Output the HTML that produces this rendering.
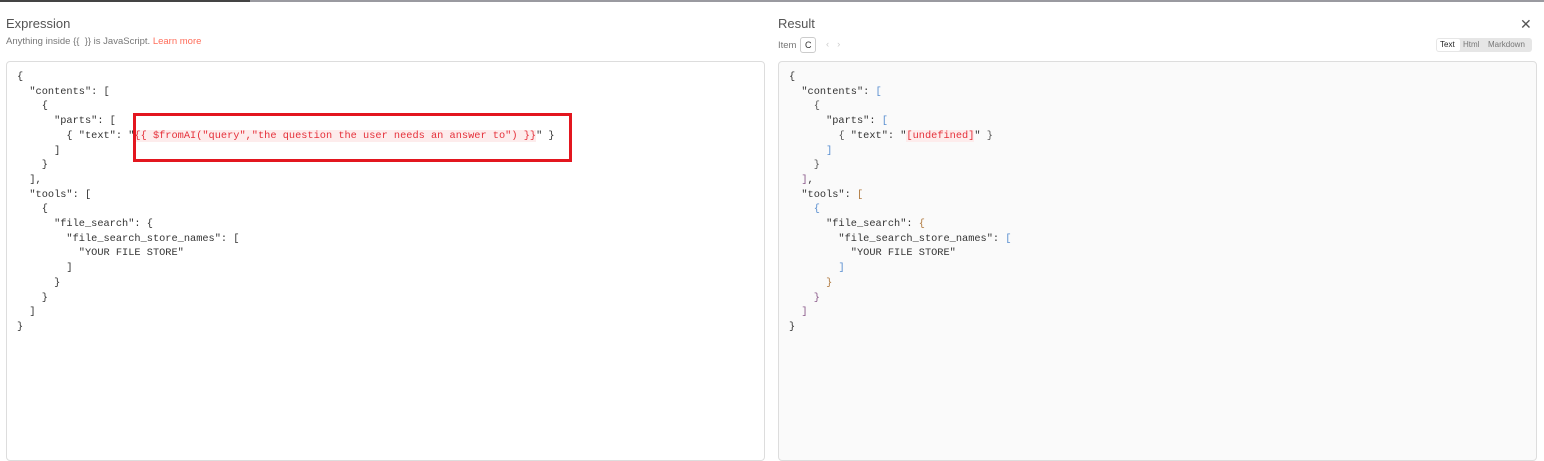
<!DOCTYPE html>
<html><head><meta charset="utf-8"><style>
*{margin:0;padding:0;box-sizing:border-box}
body{width:1544px;height:454px;overflow:hidden;background:#fff;font-family:"Liberation Sans",sans-serif;position:relative}
.top{position:absolute;left:0;top:0;width:1544px;height:2px;background:#9a9aa0}
.top2{position:absolute;left:0;top:0;width:250px;height:2px;background:#444}
.h{position:absolute;font-size:13px;color:#555}
.sub{position:absolute;font-size:9.5px;color:#777}
.box{position:absolute;top:61px;height:400px;border:1px solid #ddd;border-radius:4px}
pre{position:absolute;font-family:"Liberation Mono",monospace;font-size:10.3px;line-height:14.7px;color:#333;letter-spacing:0}
.r{color:#e5303a;background:#fdecec}
.red{position:absolute;left:133px;top:113px;width:439px;height:49px;border:3px solid #e3161f}
.b1{color:#5a8fd0}.b2{color:#555}.b3{color:#8a5a8a}.b4{color:#b07a40}
</style></head><body>
<div class="top"></div><div class="top2"></div>
<div class="h" style="left:6px;top:16px">Expression</div>
<div class="sub" style="left:6px;top:36px">Anything inside {{&nbsp; }} is JavaScript. <span style="color:#ff6d5a">Learn more</span></div>
<div class="box" style="left:6px;width:759px;background:#fff"></div>
<pre style="left:17px;top:70px">{
  "contents": [
    {
      "parts": [
        { "text": "<span class="r">{{ $fromAI("query","the question the user needs an answer to") }}</span>" }
      ]
    }
  ],
  "tools": [
    {
      "file_search": {
        "file_search_store_names": [
          "YOUR FILE STORE"
        ]
      }
    }
  ]
}</pre>
<div class="red"></div>

<div class="h" style="left:778px;top:16px">Result</div>
<div style="position:absolute;left:1520px;top:16px;font-size:14px;color:#555">✕</div>
<div class="sub" style="left:778px;top:40px">Item</div>
<div style="position:absolute;left:800px;top:37px;width:16px;height:16px;border:1px solid #ccc;border-radius:3px;font-size:9px;color:#333;padding:2px 0 0 4px">C</div>
<div class="sub" style="left:826px;top:39px;color:#ccc">‹ &nbsp; ›</div>
<div style="position:absolute;left:1436px;top:38px;width:96px;height:14px;background:#e6e6e6;border-radius:3px;font-size:8px;color:#777">
<span style="position:absolute;left:1px;top:1px;width:23px;height:12px;background:#fff;border-radius:2px;color:#222;padding:1px 0 0 3px">Text</span>
<span style="position:absolute;left:27px;top:2px">Html</span>
<span style="position:absolute;left:52px;top:2px">Markdown</span></div>
<div class="box" style="left:778px;width:759px;background:#fafafa"></div>
<pre style="left:789px;top:70px">{
  "contents": <span class="b1">[</span>
    <span class="b2">{</span>
      "parts": <span class="b1">[</span>
        <span class="b2">{</span> "text": "<span class="r">[undefined]</span>" <span class="b2">}</span>
      <span class="b1">]</span>
    <span class="b2">}</span>
  <span class="b3">]</span>,
  "tools": <span class="b4">[</span>
    <span class="b1">{</span>
      "file_search": <span class="b4">{</span>
        "file_search_store_names": <span class="b1">[</span>
          "YOUR FILE STORE"
        <span class="b1">]</span>
      <span class="b4">}</span>
    <span class="b3">}</span>
  <span class="b3">]</span>
}</pre>
</body></html>
